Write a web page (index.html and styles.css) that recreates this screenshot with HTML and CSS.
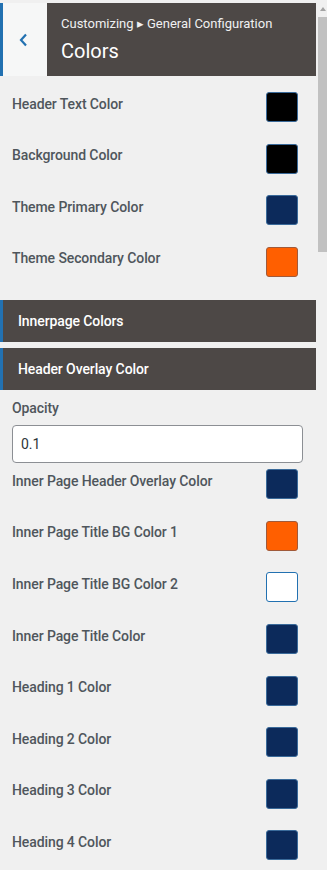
FILE: index.html
```html
<!DOCTYPE html>
<html lang="en">
<head>
    <meta charset="UTF-8">
    <meta name="viewport" content="width=device-width, initial-scale=1.0">
    <title>Customizing - Colors</title>
    <link rel="stylesheet" href="styles.css">
</head>
<body>
    <div class="screen">
        <div class="panel">
            <div class="header">
                <a href="#" class="back">
                    <svg width="10" height="14" viewBox="0 0 10 14"><polyline points="7,1.5 2,7 7,12.5" fill="none" stroke="#2271b1" stroke-width="2.2"/></svg>
                </a>
                <div class="title-box">
                    <div class="crumb">Customizing &#9656; General Configuration</div>
                    <div class="title">Colors</div>
                </div>
            </div>

            <div class="rows top-rows">
                <div class="row"><span class="label">Header Text Color</span><span class="swatch black"></span></div>
                <div class="row"><span class="label">Background Color</span><span class="swatch black"></span></div>
                <div class="row"><span class="label">Theme Primary Color</span><span class="swatch navy"></span></div>
                <div class="row"><span class="label">Theme Secondary Color</span><span class="swatch orange"></span></div>
            </div>

            <!-- Sections -->
            <div class="section">Innerpage Colors</div>
            <div class="section">Header Overlay Color</div>

            <div class="field">
                <label for="opacity" class="label">Opacity</label>
                <input type="text" id="opacity" value="0.1">
            </div>

            <div class="rows">
                <div class="row"><span class="label">Inner Page Header Overlay Color</span><span class="swatch navy"></span></div>
                <div class="row"><span class="label">Inner Page Title BG Color 1</span><span class="swatch orange"></span></div>
                <div class="row"><span class="label">Inner Page Title BG Color 2</span><span class="swatch white"></span></div>
                <div class="row"><span class="label">Inner Page Title Color</span><span class="swatch navy"></span></div>
                <div class="row"><span class="label">Heading 1 Color</span><span class="swatch navy"></span></div>
                <div class="row"><span class="label">Heading 2 Color</span><span class="swatch navy"></span></div>
                <div class="row"><span class="label">Heading 3 Color</span><span class="swatch navy"></span></div>
                <div class="row"><span class="label">Heading 4 Color</span><span class="swatch navy"></span></div>
            </div>
        </div>

        <div class="scrollbar">
            <span class="arrow"></span>
            <span class="thumb"></span>
        </div>
    </div>
</body>
</html>
```

FILE: styles.css
```css
/* General styles */
* {
    margin: 0;
    padding: 0;
    box-sizing: border-box;
}

body {
    font-family: Roboto, "Liberation Sans", sans-serif;
    background: #f0f0f0;
    color: #4f565c;
    height: 870px;
    overflow: hidden;
}

.screen {
    display: flex;
    height: 870px;
}

.panel {
    flex: 1;
    padding-top: 3px;
}

/* Header */
.header {
    display: flex;
    height: 73px;
}

.back {
    width: 47px;
    display: flex;
    align-items: center;
    justify-content: center;
    padding-right: 3px;
    background: #f6f7f7;
    border-left: 3px solid #2271b1;
}

.title-box {
    flex: 1;
    background: #4d4846;
    color: #fff;
    padding: 12px 0 0 14px;
}

.crumb {
    font-size: 13px;
    line-height: 18px;
    color: #f0f0f1;
}

.title {
    font-size: 20px;
    line-height: 26px;
    margin-top: 5px;
}

/* Color rows */
.rows {
    display: flex;
    flex-direction: column;
    gap: 21.6px;
    padding: 0 18px 0 12px;
}

.top-rows {
    padding-top: 16px;
    margin-bottom: 23px;
}

.row {
    display: flex;
    justify-content: space-between;
    align-items: flex-start;
}

.label {
    display: block;
    font-size: 14px;
    font-weight: 500;
    line-height: 20px;
    letter-spacing: -0.1px;
    margin-top: 1.5px;
}

.swatch {
    width: 32px;
    height: 30px;
    border-radius: 3px;
    border: 1px solid #3a6a9a;
}

.black { background: #000; }
.navy { background: #0c2a5b; }
.orange { background: #ff5f00; border-color: #a05a3a; }
.white { background: #fff; border-color: #2271b1; }

/* Section bars */
.section {
    height: 42px;
    line-height: 42px;
    background: #4d4846;
    color: #fff;
    border-left: 3px solid #2271b1;
    padding-left: 15px;
    font-size: 14px;
    font-weight: 500;
    letter-spacing: -0.1px;
    margin-bottom: 6px;
}

.field {
    padding: 1px 13px 6px 12px;
}

.field .label {
    margin-bottom: 7px;
}

.field input {
    display: block;
    width: 100%;
    height: 38px;
    border: 1px solid #8c8f94;
    border-radius: 4px;
    background: #fff;
    padding: 0 8px;
    font-family: Roboto, "Liberation Sans", sans-serif;
    font-size: 14px;
    color: #2c3338;
}

/* Fake scrollbar */
.scrollbar {
    width: 11px;
    padding-left: 2px;
    display: flex;
    flex-direction: column;
}

.arrow {
    height: 17px;
    display: flex;
    align-items: center;
    justify-content: center;
}

.arrow::before {
    content: "";
    border-left: 3px solid transparent;
    border-right: 3px solid transparent;
    border-bottom: 4px solid #a3a3a3;
}

.thumb {
    height: 235px;
    background: #c1c1c1;
}
```
